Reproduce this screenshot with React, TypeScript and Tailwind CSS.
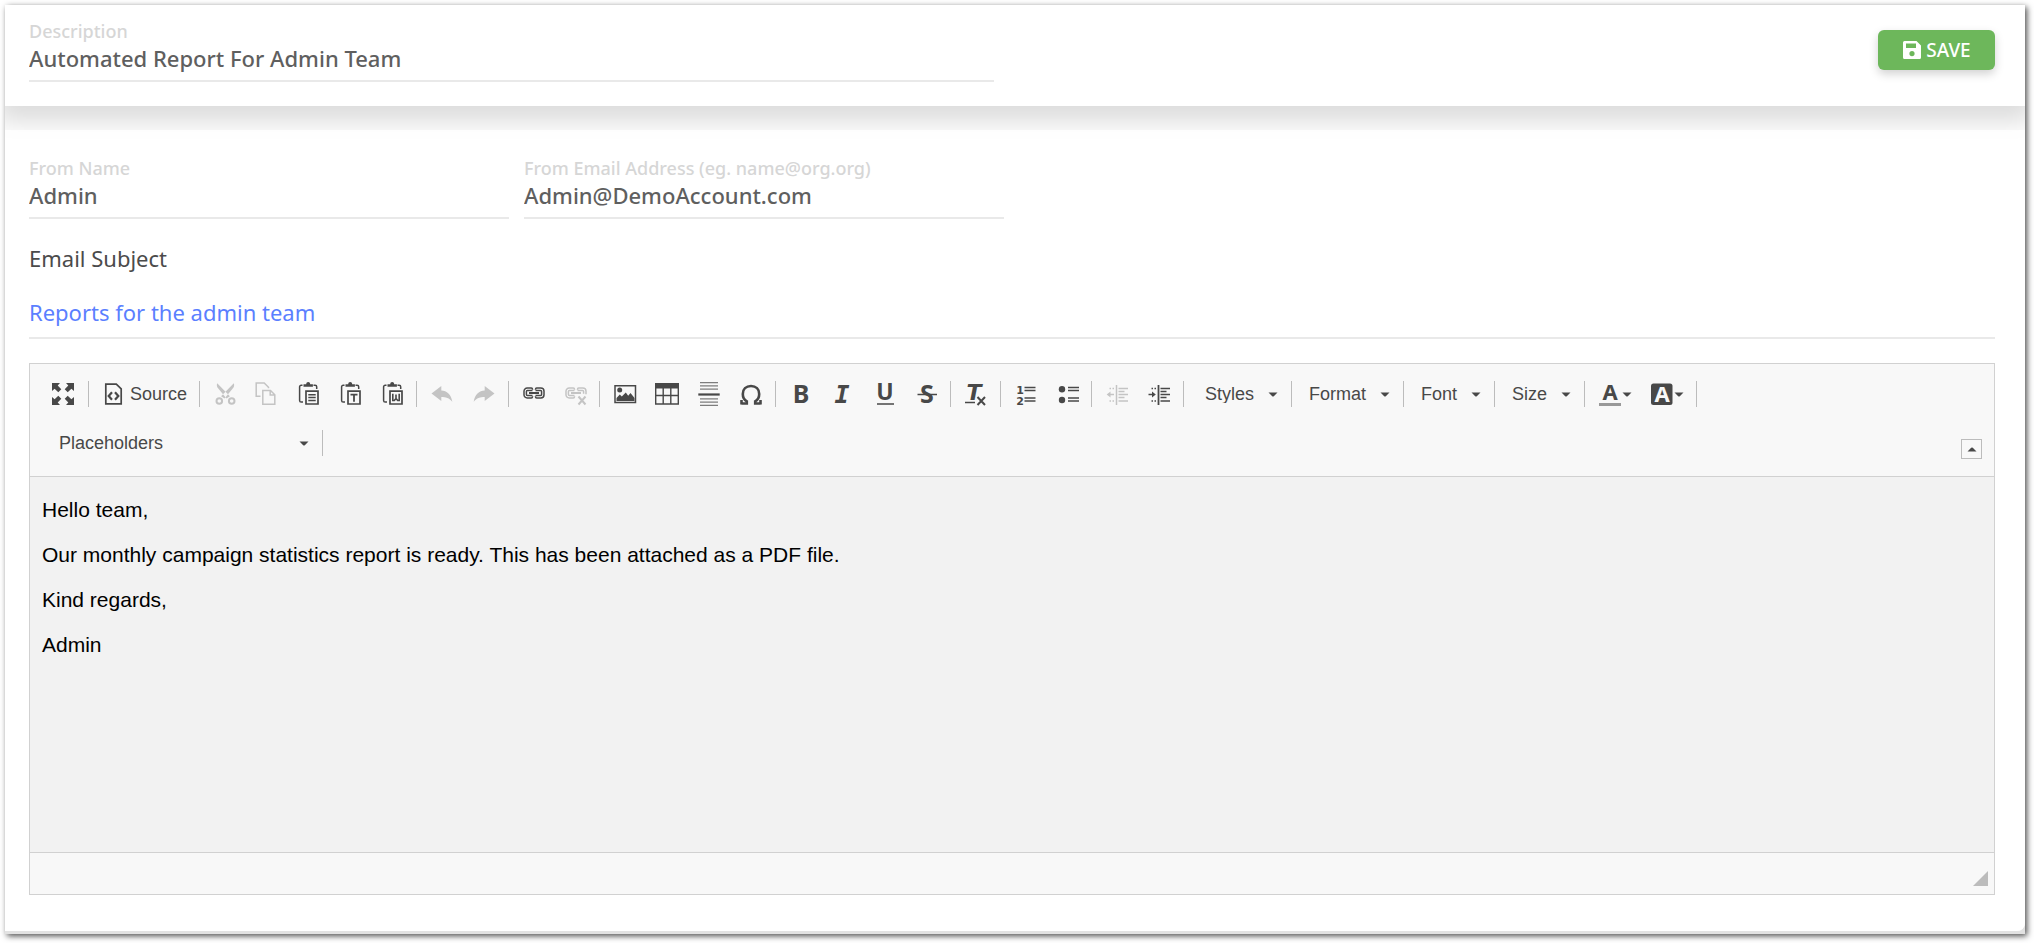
import type { ReactNode } from 'react'
import clsx from 'clsx'

function Svg({ children }: { children: ReactNode }) {
  return (
    <svg
      viewBox="0 0 24 24"
      className="h-6 w-6 shrink-0 overflow-visible"
      fill="none"
      stroke="currentColor"
      strokeWidth="1.5"
      aria-hidden="true"
    >
      {children}
    </svg>
  )
}

function Letter({ x = 12, y = 21, size = 25, font = 'Noto Sans', italic = false, fill = 'currentColor', children }: {
  x?: number
  y?: number
  size?: number
  font?: string
  italic?: boolean
  fill?: string
  children: string
}) {
  return (
    <text
      x={x}
      y={y}
      fontSize={size}
      fontFamily={`${font}, sans-serif`}
      fontWeight="700"
      fontStyle={italic ? 'italic' : 'normal'}
      textAnchor="middle"
      fill={fill}
      stroke="none"
    >
      {children}
    </text>
  )
}

const clipboard = (
  <>
    <path d="M5.5 3.2H4.2a1.6 1.6 0 0 0-1.6 1.6V18.5a1.6 1.6 0 0 0 1.6 1.6H6M16.5 3.2h1.6a1.6 1.6 0 0 1 1.6 1.6V7" />
    <path d="M6.5 4.7V2.2h2.7C9.3.8 10 0 11.2 0s1.9.8 2 2.2h2.7v2.5z" fill="currentColor" stroke="none" />
    <path d="M9 9.2h12V22H9z" strokeWidth="1.7" />
  </>
)

const chain = (
  <>
    <path d="M10.5 7.8V7.2A1.2 1.2 0 0 0 9.3 6H5.2A3.2 3.2 0 0 0 2 9.2v3.6A3.2 3.2 0 0 0 5.2 16h4.1a1.2 1.2 0 0 0 1.2-1.2v-.6" />
    <path d="M10.5 8.5H5.4a1 1 0 0 0-1 1v3a1 1 0 0 0 1 1h5.1" />
    <path d="M7 11h10" strokeWidth="2" />
  </>
)

const icons = {
  maximize: (
    <g fill="currentColor" stroke="none">
      <path d="M1 1h8L6.7 3.6l3.6 3.7-3 3-3.7-3.6L1 9z" />
      <path d="M23 1h-8l2.3 2.6-3.6 3.7 3 3 3.7-3.6L23 9z" />
      <path d="M1 23h8l-2.3-2.6 3.6-3.7-3-3-3.7 3.6L1 15z" />
      <path d="M23 23h-8l2.3-2.6-3.6-3.7 3-3 3.7 3.6L23 15z" />
    </g>
  ),
  source: (
    <>
      <path d="M3.8 2.2h10.5l4.9 4.6v15H3.8z" strokeWidth="1.7" />
      <path d="m10 10.3-3.3 3.7 3.3 3.7M13 10.3l3.3 3.7-3.3 3.7" strokeWidth="2.2" />
    </>
  ),
  cut: (
    <>
      <path
        d="M4.2 1.2c-.8 2-.2 4 1.1 5.4l8.2 9.9 3.4-2.3zM20.8 1.2c.8 2 .2 4-1.1 5.4l-8.2 9.9-3.4-2.3z"
        fill="currentColor"
        stroke="none"
      />
      <circle cx="6.3" cy="19" r="2.8" strokeWidth="2" />
      <circle cx="18.7" cy="19" r="2.8" strokeWidth="2" />
    </>
  ),
  copy: (
    <>
      <path d="M5.5 14.2H1.2V1h8l4.3 4.2v1" />
      <path d="M7.8 8.5h7.7l4.3 4.2v9.5h-12zM15.2 8.8V13h4.3" />
    </>
  ),
  paste: (
    <>
      {clipboard}
      <path d="M11.3 12.7h7.4M11.3 15.6h7.4M11.3 18.5h7.4" />
    </>
  ),
  pasteText: (
    <>
      {clipboard}
      <path d="M11.5 12.7h7M15 12.7v7" strokeWidth="1.8" />
    </>
  ),
  pasteWord: (
    <>
      {clipboard}
      <path d="M11.8 11.8v6.7h1.5l1.7-2 1.7 2h1.5v-6.7M15 12.5v4" strokeWidth="1.6" />
    </>
  ),
  undo: <path d="M1.5 11.5 11.3 4v4.6c5.5.2 10 4 11 11.2-3-3.8-6.5-4.8-11-4.8v4z" fill="currentColor" stroke="none" />,
  redo: <path d="M22.5 11.5 12.7 4v4.6c-5.5.2-10 4-11 11.2 3-3.8 6.5-4.8 11-4.8v4z" fill="currentColor" stroke="none" />,
  link: (
    <>
      {chain}
      <path d="M13.5 7.8v-.6A1.2 1.2 0 0 1 14.7 6h4.1A3.2 3.2 0 0 1 22 9.2v3.6a3.2 3.2 0 0 1-3.2 3.2h-4.1a1.2 1.2 0 0 1-1.2-1.2v-.6" />
      <path d="M13.5 8.5h5.1a1 1 0 0 1 1 1v3a1 1 0 0 1-1 1h-5.1" />
    </>
  ),
  unlink: (
    <>
      {chain}
      <path d="M13.5 7.8v-.6A1.2 1.2 0 0 1 14.7 6h4.1A3.2 3.2 0 0 1 22 9.2v3M13.5 8.5h5.1a1 1 0 0 1 1 1v2.3" />
      <path d="m14.5 14.5 7 8M21.5 14.5l-7 8" strokeWidth="2" />
    </>
  ),
  image: (
    <>
      <path d="M2 3.8h20.5v16.8H2z" />
      <circle cx="6.7" cy="8" r="2.5" fill="currentColor" stroke="none" />
      <path d="M3.5 19v-3l3.3-3.5 2 2 4-4 2.4 3.2 2.3-2.7 4 5v3z" fill="currentColor" stroke="none" />
    </>
  ),
  table: (
    <>
      <path d="M0 1h24v5.5H0z" fill="currentColor" stroke="none" />
      <path d="M.7 5v17h22.6V5M0 13.5h24M8.2 6v16M15.8 6v16" strokeWidth="1.4" />
    </>
  ),
  rule: (
    <>
      <path d="M1.3 12.5h21.4" strokeWidth="2.2" />
      <path d="M3 .7h18M3 3.9h18M3 7.1h18M3 16.9h18M3 20.1h18M3 23.3h18" strokeWidth="1.2" opacity="0.7" />
    </>
  ),
  omega: (
    <path
      d="M2.5 21.5h5.3v-2.2C5 17.8 3.8 15 3.8 12c0-4.7 3.3-8 8.2-8s8.2 3.3 8.2 8c0 3-1.2 5.8-4 7.3v2.2h5.3M2.5 22.5V18M21.5 22.5V18"
      strokeWidth="2.6"
    />
  ),
  bold: <Letter>B</Letter>,
  italic: <Letter font="DejaVu Sans Mono" italic x={11}>I</Letter>,
  underline: (
    <>
      <Letter y={18} size={23}>U</Letter>
      <path d="M4 22h17" />
    </>
  ),
  strike: (
    <>
      <Letter>S</Letter>
      <path d="M2.5 12.5H22" />
    </>
  ),
  removeFormat: (
    <>
      <Letter x={10} y={18} size={22} font="DejaVu Sans" italic>T</Letter>
      <path d="M1 20.5h10" />
      <path d="m13.5 15 7.5 8M21 15l-7.5 8" strokeWidth="2" />
    </>
  ),
  numbered: (
    <>
      <Letter x={6} y={12} size={11} font="DejaVu Sans">1</Letter>
      <Letter x={6} y={23} size={11} font="DejaVu Sans">2</Letter>
      <path d="M10.5 5.5h11M10.5 8.5h11M10.5 16h11M10.5 19h11" />
    </>
  ),
  bulleted: (
    <>
      <circle cx="6" cy="7.3" r="3.2" fill="currentColor" stroke="none" />
      <circle cx="6" cy="18" r="3.2" fill="currentColor" stroke="none" />
      <path d="M12 5.5h11M12 8.5h11M12 16h11M12 19h11" />
    </>
  ),
  outdent: (
    <>
      <path d="M11.5 3v20" />
      <path d="M13.5 6.5H23M13.5 9.5h6M13.5 12.5H23M13.5 15.5h6M13.5 19H23M4.5 6.5H6M7.5 6.5H9M4.5 19H6M7.5 19H9M3 12.5h6" />
      <path d="m5.5 9.5-3.8 3 3.8 3z" fill="currentColor" stroke="none" />
    </>
  ),
  indent: (
    <>
      <path d="M11.5 3v20" strokeWidth="1.8" />
      <path d="M13.5 6.5H23M13.5 9.5h6M13.5 12.5H23M13.5 15.5h6M13.5 19H23M4.5 6.5H6M7.5 6.5H9M4.5 19H6M7.5 19H9M1.5 12.5H7" />
      <path d="m5 9.5 3.8 3-3.8 3z" fill="currentColor" stroke="none" />
    </>
  ),
  textColor: (
    <>
      <Letter y={18} size={22}>A</Letter>
      <path d="M1 22.5h22" stroke="#999999" strokeWidth="3" />
    </>
  ),
  bgColor: (
    <>
      <rect x="1" y="1.5" width="21.5" height="21.5" rx="2.5" fill="currentColor" stroke="none" />
      <Letter y={20} size={22} fill="#f8f8f8">A</Letter>
    </>
  ),
}

type IconName = keyof typeof icons
type Tool = { name: IconName; title: string; off?: boolean }

const toolGroups: Tool[][] = [
  [
    { name: 'cut', title: 'Cut', off: true },
    { name: 'copy', title: 'Copy', off: true },
    { name: 'paste', title: 'Paste' },
    { name: 'pasteText', title: 'Paste as plain text' },
    { name: 'pasteWord', title: 'Paste from Word' },
  ],
  [
    { name: 'undo', title: 'Undo', off: true },
    { name: 'redo', title: 'Redo', off: true },
  ],
  [
    { name: 'link', title: 'Link' },
    { name: 'unlink', title: 'Unlink', off: true },
  ],
  [
    { name: 'image', title: 'Image' },
    { name: 'table', title: 'Table' },
    { name: 'rule', title: 'Insert Horizontal Line' },
    { name: 'omega', title: 'Insert Special Character' },
  ],
  [
    { name: 'bold', title: 'Bold' },
    { name: 'italic', title: 'Italic' },
    { name: 'underline', title: 'Underline' },
    { name: 'strike', title: 'Strikethrough' },
  ],
  [{ name: 'removeFormat', title: 'Remove Format' }],
  [
    { name: 'numbered', title: 'Insert/Remove Numbered List' },
    { name: 'bulleted', title: 'Insert/Remove Bulleted List' },
  ],
  [
    { name: 'outdent', title: 'Decrease Indent', off: true },
    { name: 'indent', title: 'Increase Indent' },
  ],
]

function Caret({ className }: { className?: string }) {
  return (
    <svg viewBox="0 0 10 5" className={clsx('h-[5px] w-2.5 shrink-0', className)} fill="currentColor" aria-hidden="true">
      <path d="M.5.5h9L5.8 4.2q-.8.7-1.6 0z" />
    </svg>
  )
}

function Group({ children, tight }: { children: ReactNode; tight?: boolean }) {
  return (
    <div className={clsx('flex h-[26px] items-center border-r border-[#bcbcbc] pl-1', tight ? 'pr-0.5' : 'pr-[3px]')}>
      {children}
    </div>
  )
}

function ToolButton({ name, title, off }: Tool) {
  return (
    <button type="button" title={title} disabled={off} className={clsx('px-[9px]', off && 'text-[#c4c4c4]')}>
      <Svg>{icons[name]}</Svg>
    </button>
  )
}

function Combo({ label, wide }: { label: string; wide?: boolean }) {
  return (
    <div className="relative flex h-[26px] items-center border-r border-[#bcbcbc]">
      <select
        aria-label={label}
        className={clsx('h-[26px] appearance-none bg-transparent pl-[17px] pr-9 outline-none', wide && 'w-[280px]')}
      >
        <option>{label}</option>
      </select>
      <Caret className="pointer-events-none absolute right-[13px]" />
    </div>
  )
}

function Field({ id, label, value, type = 'text' }: { id: string; label: string; value: string; type?: string }) {
  return (
    <div className="flex flex-col border-b-2 border-[#e9e9e9]">
      <label htmlFor={id} className="text-lg leading-6 text-[#d6d6d6]">
        {label}
      </label>
      <input
        id={id}
        type={type}
        defaultValue={value}
        className="mb-[7px] h-[30px] w-full bg-transparent text-[22px] text-[#5f5f5f] outline-none"
      />
    </div>
  )
}

export default function App() {
  return (
    <div className="bg-white pt-[5px] pr-[9px] pb-[9px] pl-[5px] font-['Noto_Sans',sans-serif] font-medium">
      <div className="bg-[#e2e2e2] pb-[3px] shadow-[2px_2px_6px_rgba(0,0,0,0.7)]">
        <div className="overflow-hidden rounded-br-lg bg-white">
          <header className="relative flex h-[101px] items-start justify-between bg-white pt-3.5 pr-[30px] pl-6 shadow-[0_8px_24px_8px_rgba(0,0,0,0.14)]">
            <div className="w-full max-w-[965px]">
              <Field id="description" label="Description" value="Automated Report For Admin Team" />
            </div>
            <button
              type="button"
              className="mt-[11px] flex h-10 w-[117px] items-center justify-center gap-1 rounded-md bg-[#6db75b] text-[19px] text-white shadow-[0_4px_10px_rgba(0,0,0,0.18)]"
            >
              <svg viewBox="0 0 20 20" className="h-5 w-5" fill="currentColor" aria-hidden="true">
                <path
                  fillRule="evenodd"
                  d="M2.5 1h12L19 5.5v12a1.5 1.5 0 0 1-1.5 1.5h-15A1.5 1.5 0 0 1 1 17.5v-15A1.5 1.5 0 0 1 2.5 1zM4 3.5V8h10V3.5zM10 11a2.6 2.6 0 1 0 0 5.2 2.6 2.6 0 0 0 0-5.2z"
                />
              </svg>
              SAVE
            </button>
          </header>

          <main className="relative mt-6 bg-white/80 pt-[26px] pr-[30px] pb-9 pl-6">
            <div className="grid max-w-[975px] grid-cols-2 gap-[15px]">
              <Field id="from-name" label="From Name" value="Admin" />
              <Field id="from-email" label="From Email Address (eg. name@org.org)" value="Admin@DemoAccount.com" type="email" />
            </div>

            <div className="mt-6 flex flex-col border-b-2 border-[#e9e9e9] font-normal">
              <label htmlFor="subject" className="text-[22px] leading-[30px] text-[#4b4b4b]">
                Email Subject
              </label>
              <input
                id="subject"
                defaultValue="Reports for the admin team"
                className="mt-6 mb-[10px] h-[30px] w-full bg-transparent text-[22px] text-[#5b7fff] outline-none"
              />
            </div>

            <section className="mt-6 border border-[#d1d1d1] bg-[#f8f8f8] font-['Liberation_Sans',Arial,sans-serif] font-normal">
              <div className="flex flex-col gap-px border-b border-[#d1d1d1] px-3 pt-1.5 pb-[9px] text-lg leading-none text-[#484848]">
                <div className="flex min-h-12 flex-wrap items-center">
                  <div className="flex h-[26px] items-center border-r border-[#bcbcbc] pr-1">
                    <ToolButton name="maximize" title="Maximize" />
                  </div>
                  <Group>
                    <button type="button" className="flex items-center gap-1 px-[9px]">
                      <Svg>{icons.source}</Svg>
                      Source
                    </button>
                  </Group>
                  {toolGroups.map((tools, i) => (
                    <Group key={tools[0].name} tight={i % 2 === 0}>
                      {tools.map((tool) => (
                        <ToolButton key={tool.name} {...tool} />
                      ))}
                    </Group>
                  ))}
                  <div className="flex pl-1">
                    <Combo label="Styles" />
                    <Combo label="Format" />
                    <Combo label="Font" />
                    <Combo label="Size" />
                  </div>
                  <Group>
                    <button type="button" title="Text Color" className="flex items-center px-[9px]">
                      <Svg>{icons.textColor}</Svg>
                      <Caret />
                    </button>
                    <button type="button" title="Background Color" className="flex items-center px-[9px]">
                      <Svg>{icons.bgColor}</Svg>
                      <Caret />
                    </button>
                  </Group>
                </div>
                <div className="flex h-12 items-center">
                  <Combo label="Placeholders" wide />
                  <button
                    type="button"
                    title="Collapse Toolbar"
                    className="mb-2 ml-auto flex h-5 w-[21px] items-center justify-center self-end border border-[#bcbcbc]"
                  >
                    <Caret className="rotate-180" />
                  </button>
                </div>
              </div>

              <div
                role="textbox"
                aria-label="Email body"
                aria-multiline="true"
                contentEditable
                suppressContentEditableWarning
                className="min-h-[375px] bg-[#f2f2f2] px-3 pt-2.5 text-[21px] leading-[45px] text-black outline-none"
              >
                <p>Hello team,</p>
                <p>Our monthly campaign statistics report is ready. This has been attached as a PDF file.</p>
                <p>Kind regards,</p>
                <p>Admin</p>
              </div>

              <div className="flex h-[42px] items-end justify-end border-t border-[#d1d1d1] pr-1.5 pb-2">
                <svg viewBox="0 0 15 15" className="h-[15px] w-[15px]" fill="#bcbcbc" aria-hidden="true">
                  <path d="M15 0v15H0z" />
                </svg>
              </div>
            </section>
          </main>
        </div>
      </div>
    </div>
  )
}
